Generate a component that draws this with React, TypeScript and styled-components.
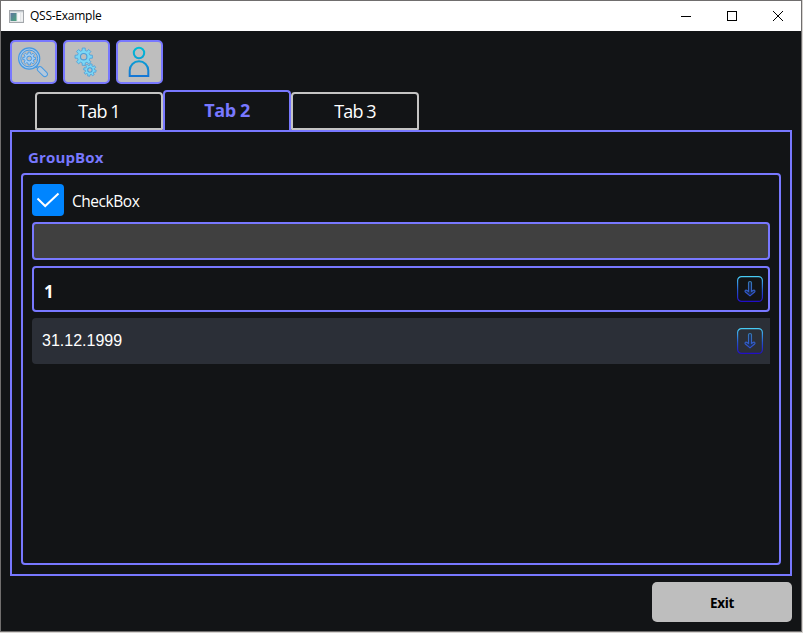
import React from "react";
import styled, { createGlobalStyle } from "styled-components";

const ACCENT = "#7878ff";
const DARK = "#121416";

const GlobalStyle = createGlobalStyle`
  *, *::before, *::after { box-sizing: border-box; }
  html, body { margin: 0; padding: 0; background: #d6d3d0; overflow: hidden; }
  button, input { font: inherit; margin: 0; }
  svg { display: block; }
`;

const Window = styled.div`
  width: 802px;
  height: 632px;
  display: flex;
  flex-direction: column;
  border: 1px solid #706e6e;
  background: ${DARK};
  color: #fff;
  font-family: "Open Sans", "Noto Sans", sans-serif;
`;

const TitleBar = styled.header`
  flex: none;
  height: 30px;
  display: flex;
  align-items: center;
  background: #fff;
  color: #000;
  padding-left: 8px;
`;

const WindowTitle = styled.span`
  flex: 1;
  margin-left: 6px;
  font-size: 12px;
  line-height: 16px;
  letter-spacing: -0.25px;
`;

const CaptionButton = styled.button`
  width: 46px;
  height: 30px;
  padding: 0;
  border: 0;
  background: transparent;
  display: flex;
  align-items: center;
  justify-content: center;
`;

const Body = styled.main`
  flex: 1;
  display: flex;
  flex-direction: column;
  padding: 9px 9px 9px;
`;

const Toolbar = styled.div`
  display: flex;
  gap: 6px;
  height: 44px;
`;

const ToolButton = styled.button`
  width: 47px;
  height: 44px;
  padding: 0 1px 0 0;
  border: 2px solid ${ACCENT};
  border-radius: 5px;
  background: #bebebe;
  display: flex;
  align-items: center;
  justify-content: center;
`;

const TabBar = styled.div`
  display: flex;
  align-items: flex-end;
  height: 40px;
  margin-top: 6px;
  padding-left: 25px;
`;

const Tab = styled.button<{ $active?: boolean }>`
  width: 128px;
  height: ${(p) => (p.$active ? 40 : 38)}px;
  padding: 0 0 ${(p) => (p.$active ? 2 : 0)}px;
  border: 2px solid ${(p) => (p.$active ? ACCENT : "#c4c4c3")};
  border-bottom-width: ${(p) => (p.$active ? 0 : 2)}px;
  border-radius: ${(p) => (p.$active ? "4px 4px 0 0" : "4px 4px 1px 1px")};
  background: ${DARK};
  color: ${(p) => (p.$active ? ACCENT : "#fff")};
  font-size: 18px;
  font-weight: ${(p) => (p.$active ? 700 : 400)};
  line-height: 24px;
  letter-spacing: ${(p) => (p.$active ? "-0.4px" : "-0.9px")};
`;

const Pane = styled.section`
  height: 446px;
  border: 2px solid ${ACCENT};
  padding: 14px 9px 9px;
  display: flex;
  flex-direction: column;
`;

const GroupTitle = styled.h2`
  margin: 0;
  height: 27px;
  padding-left: 7px;
  font-size: 15px;
  font-weight: 700;
  line-height: 22px;
  letter-spacing: 0.15px;
  color: ${ACCENT};
`;

const GroupFrame = styled.div`
  flex: 1;
  border: 2px solid ${ACCENT};
  border-radius: 4px;
  padding: 9px;
  display: flex;
  flex-direction: column;
  gap: 6px;
`;

const CheckRow = styled.label`
  display: flex;
  align-items: center;
  gap: 8px;
  height: 32px;
  font-size: 15.5px;
  letter-spacing: -0.45px;
`;

const CheckMark = styled.span`
  width: 32px;
  height: 32px;
  border-radius: 4px;
  background: #0085ff;
`;

const CheckText = styled.span`
  padding-top: 2px;
  line-height: 20px;
`;

const LineEdit = styled.input`
  width: 100%;
  height: 38px;
  border: 2px solid ${ACCENT};
  border-radius: 4px;
  background: #404040;
  color: #fff;
  padding: 0 10px;
`;

const ComboBox = styled.div`
  height: 46px;
  display: flex;
  align-items: center;
  justify-content: space-between;
  border: 2px solid ${ACCENT};
  border-radius: 4px;
  padding: 0 5px 0 10px;
  font-size: 17px;
  font-weight: 700;
`;

const ComboValue = styled.span`
  padding-top: 5px;
  line-height: 22px;
`;

const DateEdit = styled.div`
  height: 46px;
  display: flex;
  align-items: center;
  justify-content: space-between;
  border-radius: 4px 0 0 4px;
  background: #2b2f37;
  padding: 0 7px 0 10px;
  font: 16px/20px "Liberation Sans", Arial, sans-serif;
`;

const Footer = styled.footer`
  display: flex;
  justify-content: flex-end;
  margin-top: 6px;
`;

const ExitButton = styled.button`
  width: 140px;
  height: 40px;
  border: 0;
  border-radius: 5px;
  background: #bebebe;
  color: #000;
  padding: 2px 0 0;
  font-size: 13.5px;
  font-weight: 700;
  letter-spacing: -0.35px;
`;

function gearPath(cx: number, cy: number, outer: number, inner: number, turn = 0) {
  const points: string[] = [];
  for (let i = 0; i < 8; i++) {
    const base = (i * Math.PI) / 4 + turn;
    const corners: [number, number][] = [
      [-0.25, inner],
      [-0.17, outer],
      [0.17, outer],
      [0.25, inner],
    ];
    for (const [offset, r] of corners) {
      const x = cx + r * Math.cos(base + offset);
      const y = cy + r * Math.sin(base + offset);
      points.push(`${x.toFixed(2)} ${y.toFixed(2)}`);
    }
  }
  return `M${points.join("L")}Z`;
}

const AppIcon = () => (
  <svg width="15" height="13" viewBox="0 0 15 13">
    <defs>
      <linearGradient id="appScreen" x1="0" y1="0" x2="1" y2="1">
        <stop offset="0" stopColor="#6274a0" />
        <stop offset="1" stopColor="#4aa57c" />
      </linearGradient>
    </defs>
    <rect x="0.5" y="0.5" width="14" height="12" fill="#e3e6e8" stroke="#a3a7ab" />
    <path d="M1 1.5H14" stroke="#c5cbd0" />
    <rect x="1.5" y="3" width="6" height="8" fill="url(#appScreen)" />
    <rect x="8.5" y="3" width="2.5" height="8" fill="#fafafa" />
    <rect x="12" y="3" width="2" height="8" fill="#f0f1f2" />
  </svg>
);

const SearchGearIcon = () => (
  <svg width="32" height="32" viewBox="0 0 32 32" fill="none" stroke="#4599e2">
    <circle cx="12.2" cy="12.5" r="10.6" fill="#a2c8ed" strokeWidth="1.1" />
    <circle cx="12.2" cy="12.5" r="8.4" fill="#bebebe" strokeWidth="1" />
    <path d={gearPath(12.2, 12.5, 6.5, 4.8)} fill="#a3cdf4" strokeWidth="0.9" />
    <circle cx="12.2" cy="12.5" r="2.4" fill="#bebebe" strokeWidth="1" />
    <path d="M20 19.8l2.2 2.2M18.8 20.8l2.2 2.2" />
    <rect x="19.4" y="23.2" width="12" height="5" rx="2.5" transform="rotate(45 25.4 25.7)" fill="#b4c8dc" />
  </svg>
);

const GearsIcon = () => (
  <svg width="32" height="32" viewBox="0 0 32 32" stroke="#4b9dd8" strokeLinejoin="round">
    <path d={gearPath(13.7, 10.7, 8.8, 6.4)} fill="#7bd7f5" strokeWidth="0.8" />
    <circle cx="13.7" cy="10.7" r="3.2" fill="#bebebe" strokeWidth="1.1" />
    <path d={gearPath(19.9, 24, 6.3, 4.6, 0.2)} fill="#7bd7f5" strokeWidth="0.8" />
    <circle cx="19.9" cy="24" r="2.2" fill="#bebebe" strokeWidth="1.1" />
  </svg>
);

const UserIcon = () => (
  <svg width="32" height="32" viewBox="0 0 32 32" fill="none" stroke="url(#userStroke)" strokeWidth="2">
    <defs>
      <linearGradient id="userStroke" gradientUnits="userSpaceOnUse" x1="0" y1="1" x2="0" y2="31">
        <stop offset="0" stopColor="#00bfd5" />
        <stop offset="1" stopColor="#1675d5" />
      </linearGradient>
    </defs>
    <circle cx="16" cy="7" r="5.2" />
    <path d="M6.7 30V24.5a9.3 9.3 0 0 1 18.6 0V30Z" />
  </svg>
);

const DownIcon = ({ id }: { id: string }) => (
  <svg width="26" height="26" viewBox="0 0 26 26" fill="none" stroke={`url(#${id})`}>
    <defs>
      <linearGradient id={id} gradientUnits="userSpaceOnUse" x1="0" y1="0" x2="0" y2="26">
        <stop offset="0" stopColor="#49cff5" />
        <stop offset="0.55" stopColor="#2453cc" />
        <stop offset="1" stopColor="#210bc7" />
      </linearGradient>
      <linearGradient id={`${id}Arrow`} gradientUnits="userSpaceOnUse" x1="0" y1="5" x2="0" y2="21">
        <stop offset="0" stopColor="#367cb2" />
        <stop offset="1" stopColor="#304bd8" />
      </linearGradient>
    </defs>
    <rect x="0.6" y="0.6" width="24.8" height="24.8" rx="4" strokeWidth="1.2" />
    <path
      d="M11.5 15.6V6.8q0-1.3 1.5-1.3t1.5 1.3V15.6l1.4-1.1q1.2-.8 1.9 0 .6.7-.2 1.5L13 19.9l-4.6-3.9q-.8-.8-.2-1.5.7-.8 1.9 0Z"
      stroke={`url(#${id}Arrow)`}
      fill="#1b3468"
      fillOpacity="0.7"
      strokeWidth="1.1"
      strokeLinejoin="round"
    />
  </svg>
);

const tabs = ["Tab 1", "Tab 2", "Tab 3"];

export default function App() {
  return (
    <>
      <GlobalStyle />
      <Window>
        <TitleBar>
          <AppIcon />
          <WindowTitle>QSS-Example</WindowTitle>
          <CaptionButton aria-label="Minimize">
            <svg width="10" height="10" viewBox="0 0 10 10" stroke="#000"><path d="M0 5.5H10" /></svg>
          </CaptionButton>
          <CaptionButton aria-label="Maximize">
            <svg width="10" height="10" viewBox="0 0 10 10" stroke="#000" fill="none" shapeRendering="crispEdges"><rect x="0.5" y="0.5" width="9" height="9" /></svg>
          </CaptionButton>
          <CaptionButton aria-label="Close">
            <svg width="10" height="10" viewBox="0 0 10 10" stroke="#000"><path d="M0 0L10 10M10 0L0 10" /></svg>
          </CaptionButton>
        </TitleBar>
        <Body>
          <Toolbar>
            <ToolButton aria-label="Inspect"><SearchGearIcon /></ToolButton>
            <ToolButton aria-label="Settings"><GearsIcon /></ToolButton>
            <ToolButton aria-label="User"><UserIcon /></ToolButton>
          </Toolbar>
          <TabBar role="tablist">
            {tabs.map((name) => (
              <Tab key={name} role="tab" $active={name === "Tab 2"}>{name}</Tab>
            ))}
          </TabBar>
          <Pane>
            <GroupTitle>GroupBox</GroupTitle>
            <GroupFrame>
              <CheckRow>
                <CheckMark>
                  <svg width="32" height="32" viewBox="0 0 32 32" fill="none" stroke="#fff" strokeWidth="2">
                    <path d="M5.5 14.5L13.2 22L26.5 9.5" />
                  </svg>
                </CheckMark>
                <CheckText>CheckBox</CheckText>
              </CheckRow>
              <LineEdit aria-label="Text" />
              <ComboBox>
                <ComboValue>1</ComboValue>
                <DownIcon id="comboArrow" />
              </ComboBox>
              <DateEdit>
                <span>31.12.1999</span>
                <DownIcon id="dateArrow" />
              </DateEdit>
            </GroupFrame>
          </Pane>
          <Footer>
            <ExitButton>Exit</ExitButton>
          </Footer>
        </Body>
      </Window>
    </>
  );
}
